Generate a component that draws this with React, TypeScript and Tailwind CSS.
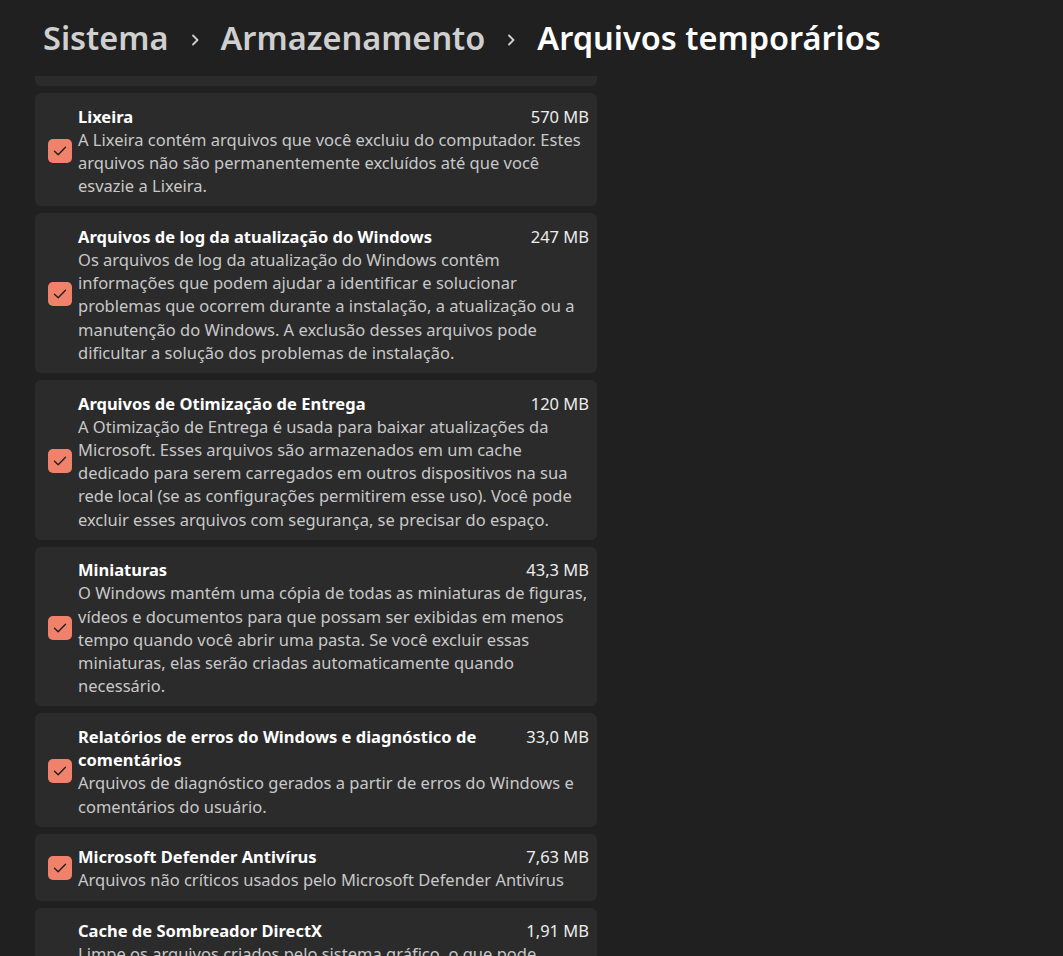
import React from "react";

type Item = {
  title: string[];
  size: string;
  lines: string[];
  checkbox?: boolean;
};

const items: Item[] = [
  {
    title: ["Lixeira"],
    size: "570 MB",
    lines: [
      "A Lixeira contém arquivos que você excluiu do computador. Estes",
      "arquivos não são permanentemente excluídos até que você",
      "esvazie a Lixeira.",
    ],
  },
  {
    title: ["Arquivos de log da atualização do Windows"],
    size: "247 MB",
    lines: [
      "Os arquivos de log da atualização do Windows contêm",
      "informações que podem ajudar a identificar e solucionar",
      "problemas que ocorrem durante a instalação, a atualização ou a",
      "manutenção do Windows. A exclusão desses arquivos pode",
      "dificultar a solução dos problemas de instalação.",
    ],
  },
  {
    title: ["Arquivos de Otimização de Entrega"],
    size: "120 MB",
    lines: [
      "A Otimização de Entrega é usada para baixar atualizações da",
      "Microsoft. Esses arquivos são armazenados em um cache",
      "dedicado para serem carregados em outros dispositivos na sua",
      "rede local (se as configurações permitirem esse uso). Você pode",
      "excluir esses arquivos com segurança, se precisar do espaço.",
    ],
  },
  {
    title: ["Miniaturas"],
    size: "43,3 MB",
    lines: [
      "O Windows mantém uma cópia de todas as miniaturas de figuras,",
      "vídeos e documentos para que possam ser exibidas em menos",
      "tempo quando você abrir uma pasta. Se você excluir essas",
      "miniaturas, elas serão criadas automaticamente quando",
      "necessário.",
    ],
  },
  {
    title: ["Relatórios de erros do Windows e diagnóstico de", "comentários"],
    size: "33,0 MB",
    lines: [
      "Arquivos de diagnóstico gerados a partir de erros do Windows e",
      "comentários do usuário.",
    ],
  },
  {
    title: ["Microsoft Defender Antivírus"],
    size: "7,63 MB",
    lines: ["Arquivos não críticos usados pelo Microsoft Defender Antivírus"],
  },
  {
    title: ["Cache de Sombreador DirectX"],
    size: "1,91 MB",
    lines: [
      "Limpe os arquivos criados pelo sistema gráfico, o que pode",
      "acelerar o tempo de carregamento de aplicativos e melhorar a",
      "capacidade de resposta.",
    ],
    checkbox: false,
  },
];

function Check() {
  return (
    <div className="w-6 h-6 shrink-0 rounded-[5px] bg-[#f0826b] flex items-center justify-center">
      <svg width="14" height="12" viewBox="0 0 14 12" fill="none">
        <path d="M1.5 6.2 L5.2 9.8 L12.5 2.2" stroke="#1c1c1c" strokeWidth="1.3" strokeLinecap="round" strokeLinejoin="round" />
      </svg>
    </div>
  );
}

function Chevron() {
  return (
    <svg width="10" height="14" viewBox="0 0 10 14" fill="none" className="mx-[21px] mt-[3px]">
      <path d="M3 2.5 L7.5 7 L3 11.5" stroke="#cfcfcf" strokeWidth="1.8" strokeLinecap="round" strokeLinejoin="round" />
    </svg>
  );
}

function Card({ item }: { item: Item }) {
  const hasCheck = item.checkbox !== false;
  return (
    <div className="w-[562px] shrink-0 rounded-[6px] bg-[#2b2b2b] pl-[13px] pr-[8px] pt-[11.5px] pb-[9px] flex items-center">
      <div className="w-6 shrink-0 self-center">{hasCheck ? <Check /> : null}</div>
      <div className="ml-[6px] flex-1 min-w-0">
        <div className="flex justify-between items-start">
          <div className="font-bold text-white text-[16.5px] leading-[23.2px]">
            {item.title.map((t, i) => (
              <div key={i} className="whitespace-nowrap">{t}</div>
            ))}
          </div>
          <div className="text-[16.5px] leading-[23.2px] text-[#ececec] whitespace-nowrap">{item.size}</div>
        </div>
        <div className="text-[16.5px] leading-[23.2px] text-[#c8c8c8]">
          {item.lines.map((l, i) => (
            <div key={i} className="whitespace-nowrap">{l}</div>
          ))}
        </div>
      </div>
    </div>
  );
}

export default function App() {
  return (
    <div
      className="w-[1063px] h-[956px] overflow-hidden bg-[#202020] flex flex-col"
      style={{ fontFamily: '"Segoe UI", "Noto Sans", sans-serif' }}
    >
      <div className="h-[76px] shrink-0 flex items-center pl-[43px] text-[32.5px] font-semibold leading-none">
        <span className="text-[#cfcfcf]">Sistema</span>
        <Chevron />
        <span className="text-[#cfcfcf]">Armazenamento</span>
        <Chevron />
        <span className="text-white">Arquivos temporários</span>
      </div>
      <div className="flex-1 overflow-hidden pl-[35px] flex flex-col gap-[7px]">
        <div className="w-[562px] h-[10px] shrink-0 rounded-b-[6px] bg-[#2b2b2b]" />
        {items.map((it, i) => (
          <Card key={i} item={it} />
        ))}
      </div>
    </div>
  );
}
